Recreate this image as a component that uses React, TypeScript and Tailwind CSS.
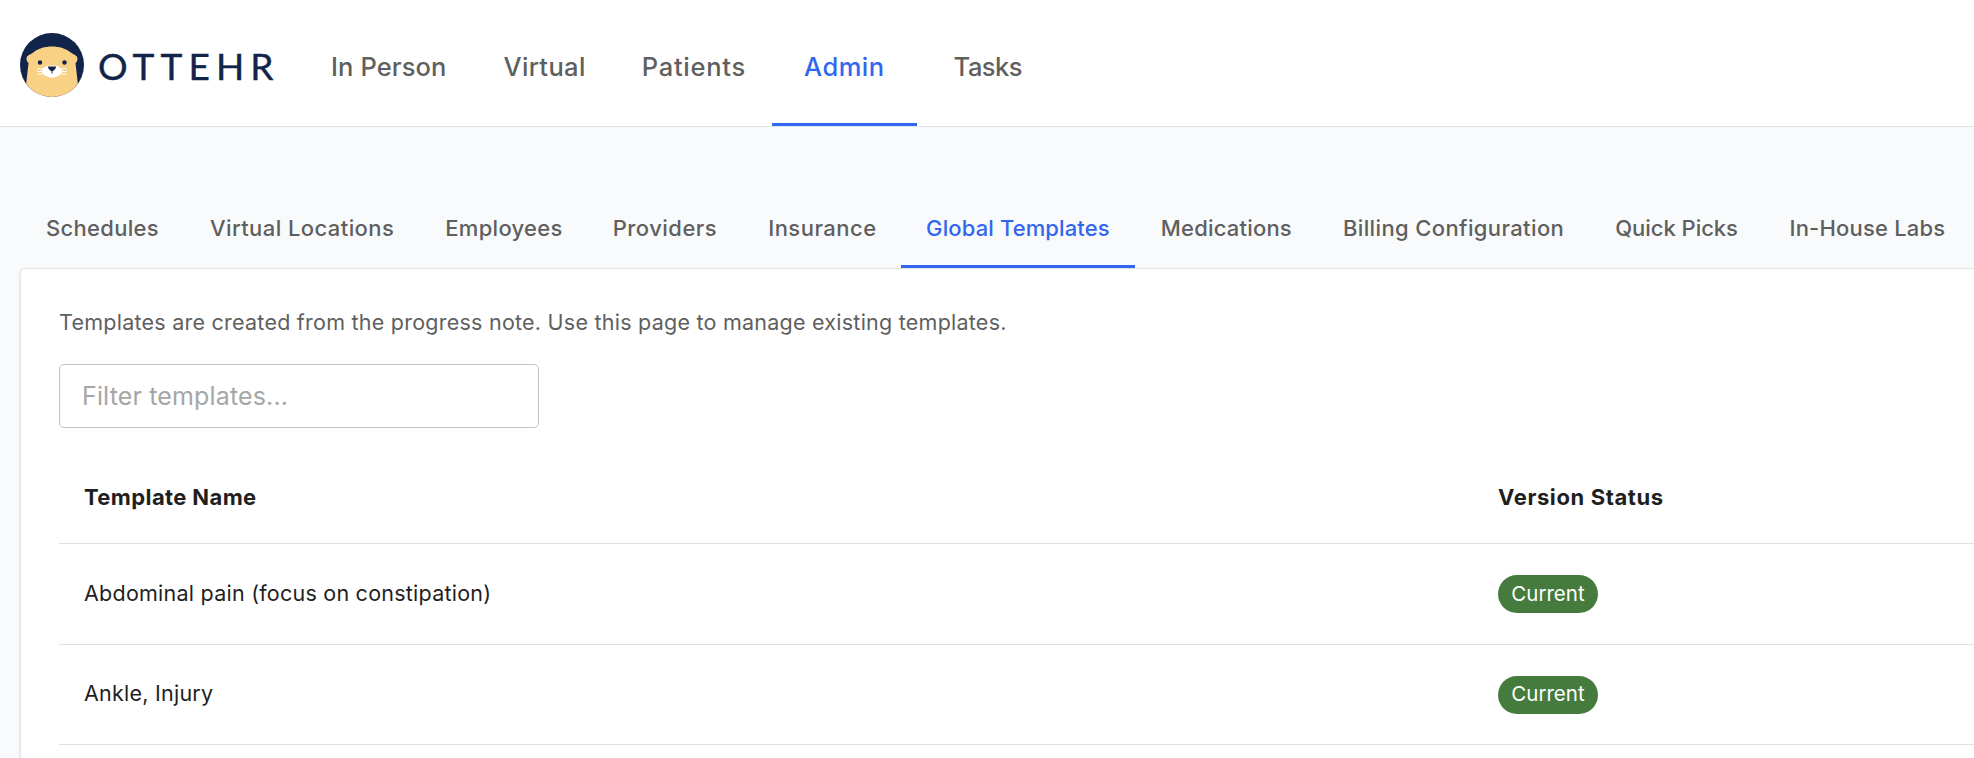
import React from "react";

const font = { fontFamily: "Inter, 'Liberation Sans', sans-serif" };

function Logo() {
  return (
    <div className="flex w-[311px] shrink-0 items-center pt-[4px]">
      <svg width="64" height="64" viewBox="0 0 64 64" className="shrink-0">
        <defs>
          <clipPath id="c"><circle cx="32" cy="32" r="32" /></clipPath>
        </defs>
        <circle cx="32" cy="32" r="32" fill="#12244a" />
        <g clipPath="url(#c)">
          <path d="M6.5 26 C6.5 22.5 9.5 22 12.5 20 C18 15.5 25 13.5 32 13.5 C39 13.5 46 15.5 51.5 20 C54.5 22 57.5 22.5 57.5 26 C57.5 28 56.5 29 55.5 30 L58 52 L40 70 L16 70 L6 52 L8.5 30 C7.5 29 6.5 28 6.5 26 Z" fill="#f8d185" />
          <path d="M22 38 C22 34.5 26 32.5 32 32.5 C38 32.5 42 34.5 42 38 C42 42 37 44.5 32 44.5 C27 44.5 22 42 22 38 Z" fill="#ffffff" />
        </g>
        <circle cx="20" cy="29.5" r="2.2" fill="#12244a" />
        <circle cx="44.5" cy="29.5" r="2.2" fill="#12244a" />
        <path d="M28 33.5 H36 C36 36 33.5 38 32 38 C30.5 38 28 36 28 33.5 Z" fill="#12244a" />
        <path d="M32 37 V40.5" stroke="#12244a" strokeWidth="1" />
        <path d="M17 35.5 L24 36.5 M17 38.5 L24 38.5 M17.5 41.5 L24 40.5 M47 35.5 L40 36.5 M47 38.5 L40 38.5 M46.5 41.5 L40 40.5" stroke="#ffffff" strokeWidth="1" />
      </svg>
      <span className="ml-[14px] text-[37px] leading-none text-[#12244a] tracking-[6.1px] [-webkit-text-stroke:0.4px_#12244a]" style={{ fontFamily: "Lato, sans-serif" }}>OTTEHR</span>
    </div>
  );
}

const topTabs = [
  { label: "In Person", cls: "pr-[29px] tracking-[0.1px]" },
  { label: "Virtual", cls: "pl-[28px] pr-[28px] tracking-[0.35px]" },
  { label: "Patients", cls: "pl-[28px] pr-[26px] tracking-[0.75px]" },
  { label: "Admin", cls: "px-[32px] tracking-[0.5px]", active: true },
  { label: "Tasks", cls: "pl-[37px] tracking-[-0.5px]" },
];

const subTabs = [
  { label: "Schedules", cls: "pl-[25.5px] pr-[25.5px] tracking-[0.3px]" },
  { label: "Virtual Locations", cls: "pl-[25.5px] pr-[25.5px] tracking-[0.42px]" },
  { label: "Employees", cls: "pl-[25.5px] pr-[24.5px] tracking-[0.3px]" },
  { label: "Providers", cls: "pl-[25.5px] pr-[25.5px] tracking-[0.48px]" },
  { label: "Insurance", cls: "pl-[25.5px] pr-[24px] tracking-[0.48px]" },
  { label: "Global Templates", cls: "pl-[25.5px] pr-[25.5px] tracking-[0.12px]", active: true },
  { label: "Medications", cls: "pl-[25.5px] pr-[25.5px] tracking-[0.2px]" },
  { label: "Billing Configuration", cls: "pl-[25.5px] pr-[25.5px] tracking-[0.38px]" },
  { label: "Quick Picks", cls: "pl-[25.5px] pr-[26px] tracking-[-0.03px]" },
  { label: "In-House Labs", cls: "pl-[25.5px] pr-[25.5px] tracking-[0.2px]" },
];

const rows = [
  { name: "Abdominal pain (focus on constipation)", h: "h-[101px]" },
  { name: "Ankle, Injury", h: "h-[100px]" },
];

export default function App() {
  return (
    <div className="h-[758px] w-[1974px] overflow-hidden bg-[#f9fafc]" style={font}>
      <header className="flex h-[127px] items-stretch border-b border-[#e2e4e8] bg-white pl-[20px]">
        <Logo />
        <nav className="flex items-stretch">
          {topTabs.map((t) => (
            <div
              key={t.label}
              className={`flex items-center border-b-[3px] pt-[11px] text-[25.5px] font-medium ${t.cls} ${t.active ? "border-[#3366ee] text-[#3366ee]" : "border-transparent text-[#5f5f5f]"}`}
            >
              {t.label}
            </div>
          ))}
        </nav>
      </header>

      <main className="pl-[20px]">
        <div className="flex h-[141px] items-end pl-[0.5px]">
          {subTabs.map((t) => (
            <div
              key={t.label}
              className={`flex h-[80px] items-center whitespace-nowrap border-b-[3px] pt-[4px] text-[22px] font-medium ${t.cls} ${t.active ? "border-[#3366ee] text-[#3366ee]" : "border-transparent text-[#5f5f5f]"}`}
            >
              {t.label}
            </div>
          ))}
        </div>

        <section className="-mr-[40px] h-[600px] rounded-tl-[5px] border border-[#e2e4e8] bg-white px-[38px] pt-[38px] shadow-sm">
          <p className="text-[21.5px] leading-[30px] tracking-[0.24px] text-[#5f5f5f]">Templates are created from the progress note. Use this page to manage existing templates.</p>
          <input
            placeholder="Filter templates..."
            readOnly
            className="mt-[27px] block h-[64px] w-[480px] rounded-[5px] border border-[#c4c4c4] bg-white px-[22px] text-[25px] tracking-[0.15px] outline-none placeholder:text-[#a6a6a6]"
          />
          <div className="mt-[23px] flex h-[93px] items-center border-b border-[#e0e0e0] text-[22px] font-bold text-[#1f1f1f]">
            <div className="w-[1439px] pl-[25px] tracking-[0.38px]">Template Name</div>
            <div className="tracking-[0.6px]">Version Status</div>
          </div>
          {rows.map((r) => (
            <div key={r.name} className={`flex ${r.h} items-center border-b border-[#e0e0e0] text-[21.5px] tracking-[0.24px] text-[#1f1f1f]`}>
              <div className="-mt-[2px] w-[1439px] pl-[25px]">{r.name}</div>
              <span className="flex h-[38px] w-[100px] items-center justify-center rounded-[19px] bg-[#467b3e] text-[20.5px] tracking-normal text-white">Current</span>
            </div>
          ))}
        </section>
      </main>
    </div>
  );
}
